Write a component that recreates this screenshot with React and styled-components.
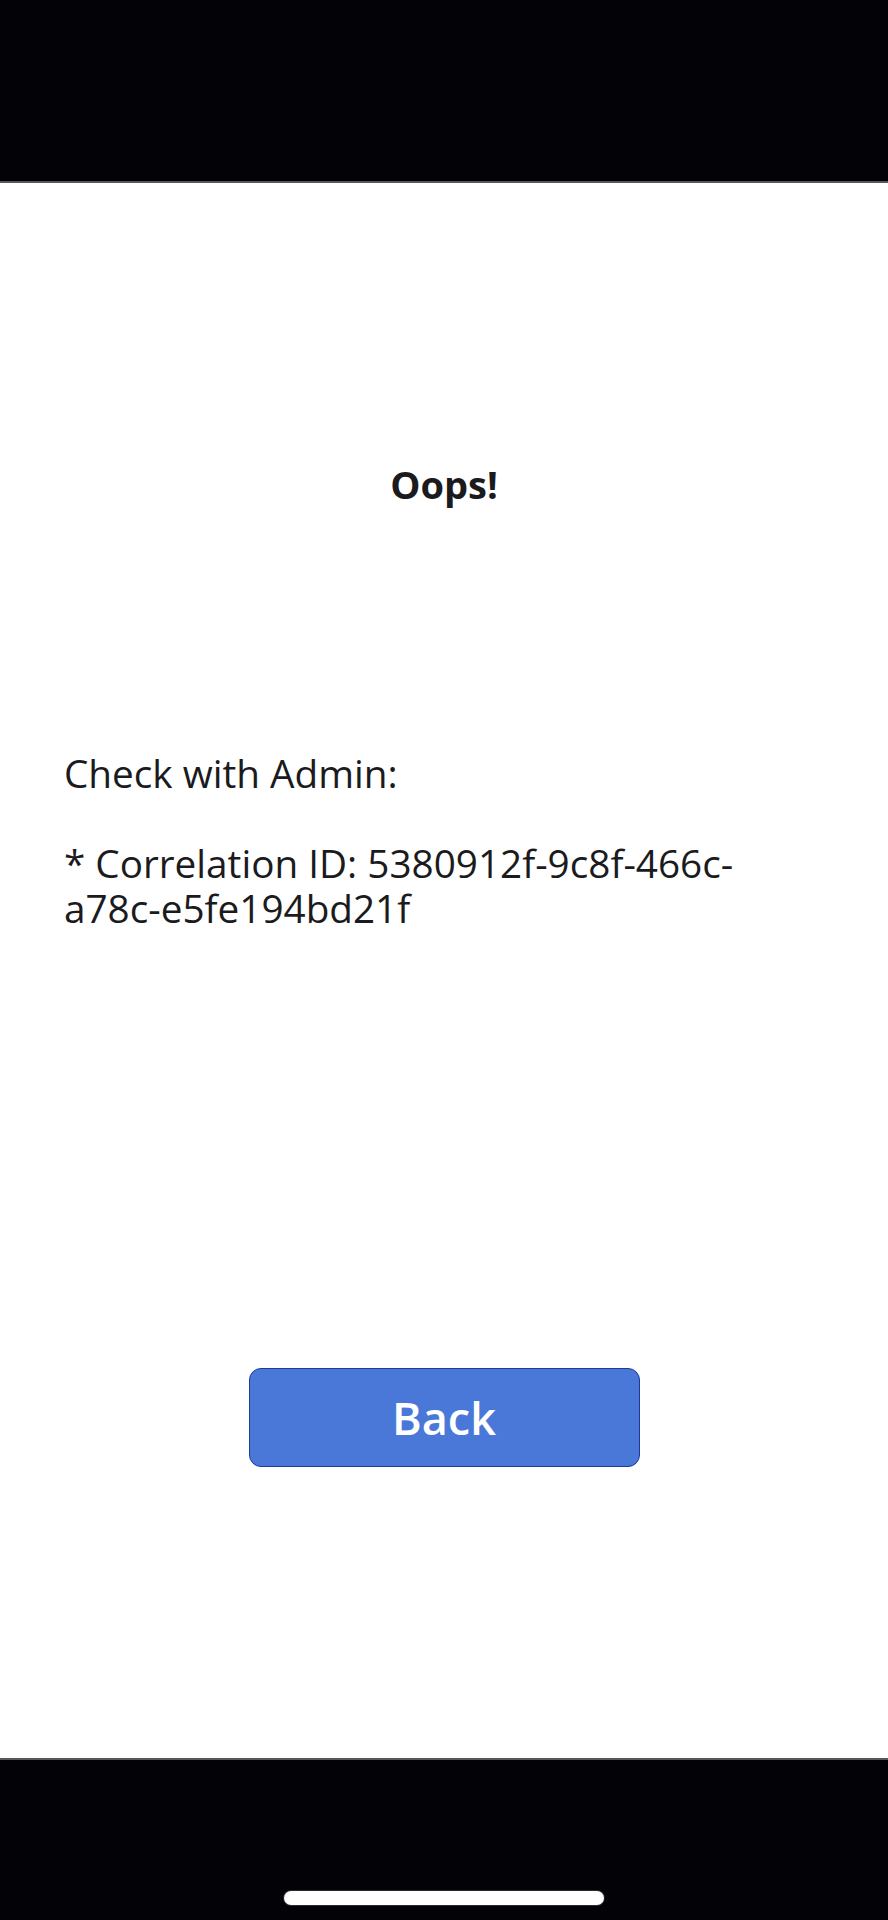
import React from "react";
import styled, { createGlobalStyle } from "styled-components";

const GlobalStyle = createGlobalStyle`
  html, body {
    margin: 0;
    padding: 0;
    background: #030206;
  }
  body {
    font-family: 'Open Sans', 'Noto Sans', sans-serif;
  }
`;

const Screen = styled.div`
  display: flex;
  flex-direction: column;
  width: 888px;
  height: 1920px;
  background: #030206;
`;

const StatusBar = styled.div`
  height: 181px;
  background: #030206;
  border-bottom: 2px solid #58585c;
  flex-shrink: 0;
`;

const Content = styled.main`
  flex: 1;
  display: flex;
  flex-direction: column;
  background: #ffffff;
  color: #1b1b1d;
`;

const Title = styled.h1`
  margin: 279px 0 0;
  font-size: 38px;
  line-height: 45px;
  font-weight: 700;
  text-align: center;
`;

const Message = styled.p`
  margin: 244px 0 0;
  padding: 0 100px 0 64px;
  font-size: 38.7px;
  line-height: 45px;
  font-weight: 400;
  white-space: pre-line;
`;

const Actions = styled.div`
  display: flex;
  justify-content: center;
  margin-top: 437px;
`;

const Button = styled.button`
  width: 391px;
  height: 99px;
  box-sizing: border-box;
  border: 1px solid #1d3a99;
  border-radius: 12px;
  background: #4a78d8;
  color: #ffffff;
  font-family: 'Open Sans', 'Noto Sans', sans-serif;
  font-size: 45px;
  font-weight: 600;
  cursor: pointer;
  padding: 0;
`;

const HomeBar = styled.div`
  height: 162px;
  box-sizing: border-box;
  background: #030206;
  border-top: 2px solid #58585c;
  flex-shrink: 0;
  display: flex;
  justify-content: center;
  align-items: flex-end;
  padding-bottom: 15px;
`;

const Indicator = styled.div`
  width: 320px;
  height: 14px;
  border-radius: 7px;
  background: #ffffff;
  box-shadow: 0 0 0 1px #2a2a2e;
`;

const message = `Check with Admin:

* Correlation ID: 5380912f-9c8f-466c-a78c-e5fe194bd21f`;

export default function App() {
  return (
    <>
      <GlobalStyle />
      <Screen>
        <StatusBar />
        <Content>
          <Title>Oops!</Title>
          <Message>{message}</Message>
          <Actions>
            <Button>Back</Button>
          </Actions>
        </Content>
        <HomeBar>
          <Indicator />
        </HomeBar>
      </Screen>
    </>
  );
}
